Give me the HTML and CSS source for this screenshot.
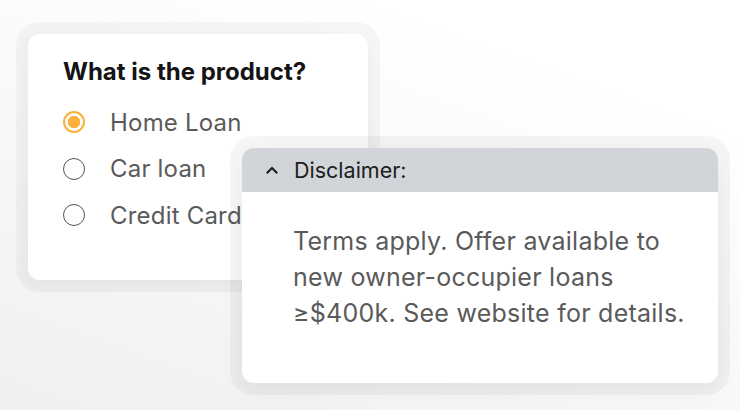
FILE: index.html
```html
<!DOCTYPE html>
<html lang="en">
<head>
  <meta charset="UTF-8">
  <title>Product question</title>
  <link rel="stylesheet" href="styles.css">
</head>
<body>
  <div class="scheda">
    <h2 class="domanda">What is the product?</h2>
    <label class="opzione">
      <span class="radio attivo"></span>
      <span class="etichetta">Home Loan</span>
    </label>
    <label class="opzione">
      <span class="radio"></span>
      <span class="etichetta">Car loan</span>
    </label>
    <label class="opzione">
      <span class="radio"></span>
      <span class="etichetta">Credit Card</span>
    </label>
  </div>

  <div id="disclaimer">
    <div class="testata">
      <svg class="freccia" width="12" height="8" viewBox="0 0 12 8">
        <path d="M1.5 6.5 L6 2 L10.5 6.5" fill="none" stroke="#1a1a1a" stroke-width="2" stroke-linecap="square"/>
      </svg>
      <span>Disclaimer:</span>
    </div>
    <p class="testo">Terms apply. Offer available to new owner-occupier loans &ge;$400k. See website for details.</p>
  </div>
</body>
</html>
```

FILE: styles.css
```css
html, body {
  margin: 0;
  height: 100%;
}

body {
  padding: 34px 0 0 28px;
  box-sizing: border-box;
  background: linear-gradient(200deg, #ffffff 20%, #f0f0f1 100%);
  font-family: Inter, "Noto Sans", sans-serif;
  overflow: hidden;
}

.scheda {
  width: 340px;
  height: 246px;
  box-sizing: border-box;
  padding: 23px 0 0 35px;
  background: white;
  border-radius: 12px;
  box-shadow: 0 0 0 12px rgba(20, 20, 40, 0.035), 0 4px 18px rgba(0, 0, 0, 0.04);
}

.domanda {
  margin: 0 0 13px;
  font-size: 24px;
  line-height: 29px;
  font-weight: 700;
  color: #141414;
}

.opzione {
  display: flex;
  align-items: center;
  height: 46.5px;
}

.radio {
  width: 22px;
  height: 22px;
  box-sizing: border-box;
  border: 1.5px solid #555;
  border-radius: 50%;
  margin-right: 25px;
  flex-shrink: 0;
}

.radio.attivo {
  border: 2px solid #fbb13c;
  background: radial-gradient(circle, #fbb13c 0 6px, white 6.5px);
}

.etichetta {
  font-size: 24px;
  letter-spacing: 0.2px;
  color: #5a5a5a;
}

#disclaimer {
  position: absolute;
  left: 242px;
  top: 148px;
  width: 476px;
  height: 235px;
  background: white;
  border-radius: 12px;
  overflow: hidden;
  box-shadow: 0 0 0 12px rgba(20, 20, 40, 0.04), 0 6px 24px rgba(0, 0, 0, 0.05);
}

.testata {
  display: flex;
  align-items: center;
  gap: 16px;
  height: 44px;
  padding-left: 24px;
  background: #d1d4d8;
  font-size: 21.5px;
  color: #1c1c1c;
}

.freccia {
  margin-top: -1px;
}

.testo {
  margin: 31px 0 0 51px;
  width: 410px;
  font-size: 25px;
  line-height: 36px;
  letter-spacing: 0.25px;
  color: #5a5a5a;
}
```
